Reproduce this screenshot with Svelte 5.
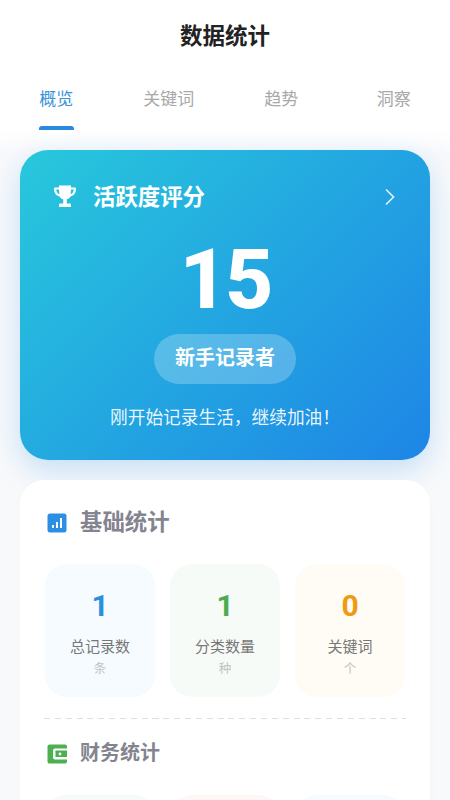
<script>
    const tabs = ['概览', '关键词', '趋势', '洞察'];
    const basic = [
        { value: 1, label: '总记录数', unit: '条', tone: 'blue' },
        { value: 1, label: '分类数量', unit: '种', tone: 'green' },
        { value: 0, label: '关键词', unit: '个', tone: 'orange' }
    ];
    const finance = ['green', 'red', 'blue'];
</script>

<div class="page">
    <header class="top">
        <h1>数据统计</h1>
        <nav class="tabs">
            {#each tabs as tab, i}
                <div class="tab" class:active={i === 0}>{tab}</div>
            {/each}
        </nav>
    </header>

    <main class="content">
        <section class="score">
            <div class="score-head">
                <svg class="trophy" viewBox="0 0 24 24" width="24" height="24">
                    <path fill="#fff" d="M6 0.500h12v2h3.700c.9 0 1.300.5 1.300 1.300 0 3.900-1.900 6.900-5.500 7.600-.9 1.500-2.100 2.500-3.700 2.900v4.200h3c.8 0 1.200.4 1.200 1.200v2.300H6v-2.300c0-.8.400-1.200 1.200-1.200h3v-4.200c-1.600-.4-2.800-1.400-3.700-2.900C2.900 10.700 1 7.700 1 3.800c0-.8.400-1.300 1.300-1.300H6v-2zM3.200 4.500c.2 2.300 1.200 3.900 3.200 4.700-.2-1.500-.4-3.100-.4-4.700H3.200zM20.800 4.500H18c0 1.600-.2 3.200-.4 4.700 2-.8 3-2.400 3.200-4.700z"/>
                </svg>
                <span class="score-title">活跃度评分</span>
                <svg class="chevron" viewBox="0 0 12 18" width="12" height="18">
                    <path d="M2 1.500 9.500 9 2 16.500" fill="none" stroke="#fff" stroke-width="1.700" opacity="0.85"/>
                </svg>
            </div>
            <div class="score-value">15</div>
            <div class="level">新手记录者</div>
            <p class="score-note">刚开始记录生活，继续加油！</p>
        </section>

        <section class="panel">
            <div class="panel-head">
                <svg viewBox="0 0 20 20" width="20" height="20">
                    <rect width="19" height="19" x="0.500" y="0.500" rx="2.500" fill="#2b90e3"/>
                    <path fill="#fff" d="M5 12h2v3H5zM9 9h2v6H9zM13 5h2v10h-2z"/>
                </svg>
                <h2>基础统计</h2>
            </div>
            <div class="stats">
                {#each basic as item}
                    <div class="stat {item.tone}">
                        <div class="stat-value">{item.value}</div>
                        <div class="stat-label">{item.label}</div>
                        <div class="stat-unit">{item.unit}</div>
                    </div>
                {/each}
            </div>

            <div class="divider"></div>

            <div class="panel-head second">
                <svg viewBox="0 0 20 20" width="20" height="20">
                    <rect width="19.500" height="19" x="0.500" y="0.500" rx="2" fill="#4caf50"/>
                    <path fill="#fff" fill-rule="evenodd" d="M8 4.500h12v11H8a2 2 0 0 1-2-2v-7a2 2 0 0 1 2-2zm.5 2v6.500H20V6.500H8.500z"/>
                    <circle cx="13" cy="10" r="1.400" fill="#fff"/>
                </svg>
                <h2 class="small">财务统计</h2>
            </div>
            <div class="stats">
                {#each finance as tone}
                    <div class="stat {tone}"></div>
                {/each}
            </div>
        </section>
    </main>
</div>

<style>
    :global(body) {
        margin: 0;
        background: #f8f9fb;
        font-family: "Noto Sans CJK SC", "Noto Sans", sans-serif;
    }

    .page {
        width: 450px;
        height: 800px;
        overflow: hidden;
        background: #f8f9fb;
    }

    .top {
        height: 130px;
        background: #fff;
    }

    h1 {
        margin: 0;
        padding-top: 18px;
        height: 52px;
        font-size: 22.500px;
        line-height: 32px;
        font-weight: 700;
        color: #222;
        text-align: center;
    }

    .tabs {
        display: grid;
        grid-template-columns: repeat(4, 1fr);
    }

    .tab {
        position: relative;
        height: 60px;
        font-size: 17px;
        line-height: 56px;
        color: #a8a8a8;
        text-align: center;
    }

    .tab.active {
        color: #3a92d8;
    }

    .tab.active::after {
        content: '';
        position: absolute;
        left: 39px;
        width: 35px;
        bottom: 0;
        height: 4px;
        border-radius: 3px 3px 0 0;
        background: #2b8ade;
    }

    .content {
        padding: 20px 20px 0;
        background: linear-gradient(#fff, #f8f9fb 24px);
    }

    .score {
        height: 310px;
        box-sizing: border-box;
        padding-top: 29px;
        border-radius: 28px;
        background: linear-gradient(135deg, #28c8dc, #1e85e6);
        box-shadow: 0 10px 30px rgba(30, 136, 229, 0.24);
        color: #fff;
        text-align: center;
    }

    .score-head {
        display: flex;
        align-items: center;
        height: 36px;
        padding: 0 34px 0 33px;
    }

    .trophy {
        flex: none;
    }

    .score-title {
        margin-left: 16px;
        padding-bottom: 5px;
        font-size: 22.400px;
        font-weight: 700;
    }

    .chevron {
        margin-left: auto;
    }

    .score-value {
        margin-top: 20px;
        height: 87px;
        font-family: Roboto, sans-serif;
        font-size: 84px;
        line-height: 90px;
        font-weight: 800;
        letter-spacing: -3px;
    }

    .level {
        width: 142px;
        height: 50px;
        margin: 12px auto 0;
        border-radius: 25px;
        background: rgba(255, 255, 255, 0.24);
        font-size: 20px;
        line-height: 46px;
        font-weight: 700;
    }

    .score-note {
        margin: 19px 0 0;
        font-size: 17.700px;
        line-height: 26px;
        color: rgba(255, 255, 255, 0.92);
    }

    .panel {
        margin-top: 20px;
        height: 400px;
        box-sizing: border-box;
        padding: 28px 25px 0;
        border-radius: 24px;
        background: #fff;
        box-shadow: 0 2px 12px rgba(0, 0, 0, 0.015);
    }

    .panel-head {
        display: flex;
        align-items: center;
        gap: 13px;
        height: 30px;
        padding-left: 2px;
    }

    h2 {
        margin: 0;
        padding-bottom: 6px;
        font-size: 22.400px;
        font-weight: 700;
        color: #84848f;
    }

    h2.small {
        font-size: 20px;
    }

    .stats {
        display: grid;
        grid-template-columns: repeat(3, 110px);
        justify-content: space-between;
        margin-top: 26px;
    }

    .stat {
        height: 133px;
        border-radius: 22px;
        text-align: center;
    }

    .stat.blue { background: #f5fbff; }
    .stat.green { background: #f7fbf7; }
    .stat.orange { background: #fffbf5; }
    .stat.red { background: #fff6f6; }

    .stat-value {
        padding-top: 24px;
        font-family: Roboto, sans-serif;
        font-size: 30px;
        line-height: 36px;
        font-weight: 700;
    }

    .blue .stat-value { color: #2b8fdf; }
    .green .stat-value { color: #4caa50; }
    .orange .stat-value { color: #f09a12; }

    .stat-label {
        margin-top: 10px;
        font-size: 15px;
        line-height: 24px;
        color: #777;
    }

    .stat-unit {
        font-size: 12.500px;
        line-height: 20px;
        color: #c2c2c2;
    }

    .divider {
        height: 1px;
        margin: 21px -1px 20px;
        background: repeating-linear-gradient(90deg, #dedede 0 6px, transparent 6px 10.850px);
    }
</style>
